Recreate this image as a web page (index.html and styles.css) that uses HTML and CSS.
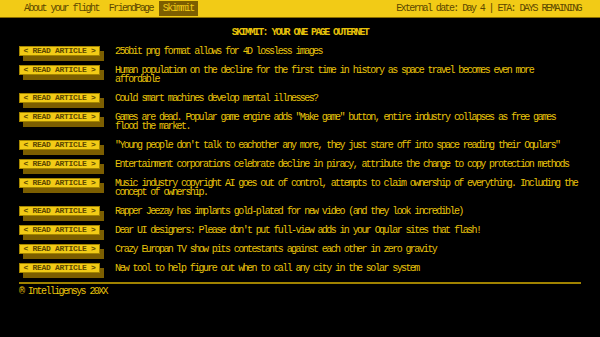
FILE: index.html
```html
<!DOCTYPE html>
<html lang="en">
<head>
    <meta charset="UTF-8">
    <title>Skimmit</title>
    <link rel="stylesheet" href="styles.css">
</head>
<body>
    <header class="topbar">
        <nav class="nav">
            <a href="#">About your flight</a>
            <a href="#">FriendPage</a>
            <a href="#" class="active">Skimmit</a>
        </nav>
        <div class="status">External date: Day 4 | ETA: DAYS REMAINING</div>
    </header>

    <main class="page">
        <h1>SKIMMIT: YOUR ONE PAGE OUTERNET</h1>

        <ul class="articles">
            <li><a class="btn" href="#">&lt; READ ARTICLE &gt;</a><span>256bit png format allows for 4D lossless images</span></li>
            <li><a class="btn" href="#">&lt; READ ARTICLE &gt;</a><span>Human population on the decline for the first time in history as space travel becomes even more affordable</span></li>
            <li><a class="btn" href="#">&lt; READ ARTICLE &gt;</a><span>Could smart machines develop mental illnesses?</span></li>
            <li><a class="btn" href="#">&lt; READ ARTICLE &gt;</a><span>Games are dead. Popular game engine adds "Make game" button, entire industry collapses as free games flood the market.</span></li>
            <li><a class="btn" href="#">&lt; READ ARTICLE &gt;</a><span>"Young people don't talk to eachother any more, they just stare off into space reading their Oqulars"</span></li>
            <li><a class="btn" href="#">&lt; READ ARTICLE &gt;</a><span>Entertainment corporations celebrate decline in piracy, attribute the change to copy protection methods</span></li>
            <li><a class="btn" href="#">&lt; READ ARTICLE &gt;</a><span>Music industry copyright AI goes out of control, attempts to claim ownership of everything. Including the concept of ownership.</span></li>
            <li><a class="btn" href="#">&lt; READ ARTICLE &gt;</a><span>Rapper Jeezay has implants gold-plated for new video (and they look incredible)</span></li>
            <li><a class="btn" href="#">&lt; READ ARTICLE &gt;</a><span>Dear UI designers: Please don't put full-view adds in your Oqular sites that flash!</span></li>
            <li><a class="btn" href="#">&lt; READ ARTICLE &gt;</a><span>Crazy Europan TV show pits contestants against each other in zero gravity</span></li>
            <li><a class="btn" href="#">&lt; READ ARTICLE &gt;</a><span>New tool to help figure out when to call any city in the solar system</span></li>
        </ul>

        <footer class="footer">&reg; Intelligensys 20XX</footer>
    </main>
</body>
</html>
```

FILE: styles.css
```css
body { margin: 0; background: #000; color: #e8c30a; font-family: "Liberation Mono", "DejaVu Sans Mono", monospace; font-size: 10px; letter-spacing: -1.6px; line-height: 9px; }
a { text-decoration: none; color: inherit; }

.topbar { display: flex; justify-content: space-between; align-items: center; height: 17px; background: #f2cb16; border-bottom: 1px solid #8a6d00; padding: 0 19px 0 20px; color: #5c4700; }
.nav { display: flex; gap: 2px; }
.nav a { padding: 3px 4px; }
.nav a.active { background: #7c5e00; color: #f2cb16; }

.page { padding: 0 19px; }
h1 { margin: 10px 0 9px; text-align: center; font-size: 10px; font-weight: bold; }

.articles { list-style: none; margin: 0; padding: 0; display: flex; flex-direction: column; gap: 9px; }
.articles li { display: flex; align-items: flex-start; gap: 15px; }
.articles span { flex: 1; padding-top: 1px; }
.btn { flex: none; box-sizing: border-box; width: 81px; height: 10px; line-height: 8px; text-align: center; background: #f2cb16; color: #5c4700; border: 1px solid #a58600; box-shadow: 4px 5px 0 #7c5e00; font-size: 8px; font-weight: bold; letter-spacing: -0.3px; }

.footer { margin-top: 9px; padding-top: 3px; border-top: 2px solid #a08200; }
```
